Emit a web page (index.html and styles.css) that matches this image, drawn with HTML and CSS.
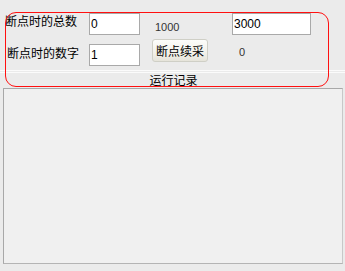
FILE: index.html
```html
<!DOCTYPE html>
<html lang="zh">

<head>
    <meta charset="UTF-8">
    <title>断点续采</title>
    <link rel="stylesheet" href="styles.css">
</head>

<body>
    <!-- Parámetros del punto de interrupción -->
    <div class="panel">
        <span class="label label-total">断点时的总数</span>
        <input class="field field-short" type="text" value="0">
        <span class="num num-max">1000</span>
        <input class="field field-long" type="text" value="3000">

        <span class="label label-count">断点时的数字</span>
        <input class="field field-short field-low" type="text" value="1">
        <button class="btn">断点续采</button>
        <span class="num num-count">0</span>
    </div>

    <!-- Separador -->
    <div class="sep"></div>

    <!-- Registro de ejecución -->
    <div class="group-title">运行记录</div>
    <div class="log"></div>

    <!-- Marca roja sobre los parámetros -->
    <div class="mark"></div>
</body>

</html>
```

FILE: styles.css
```css
/* Reseteo básico */
* {
    margin: 0;
    padding: 0;
    box-sizing: border-box;
}

body {
    background: #ebebeb;
    font-family: "Noto Sans CJK SC", sans-serif;
    font-size: 12px;
    color: #000;
    position: relative;
    height: 271px;
    overflow: hidden;
}

/* Rejilla de parámetros */
.panel {
    display: grid;
    grid-template-columns: 84px 51px 92px 79px;
    grid-template-rows: 22px 27px;
    row-gap: 4px;
    padding: 13px 0 0 5px;
    margin-bottom: 4px;
}

.label {
    line-height: 14px;
    align-self: start;
    white-space: nowrap;
}

.label-total {
    margin-top: 1px;
}

.label-count {
    margin-top: 7px;
    margin-left: 2px;
}

.field {
    height: 22px;
    border: 1px solid #a9a9a9;
    background: #fff;
    font-family: "Liberation Sans", sans-serif;
    font-size: 12px;
    padding: 0 1px;
    color: #000;
    outline: none;
}

.field-short {
    width: 51px;
}

.field-long {
    width: 79px;
}

.field-low {
    align-self: end;
}

.num {
    font-family: "Liberation Sans", sans-serif;
    font-size: 11px;
    line-height: 14px;
    color: #333;
    align-self: start;
}

.num-max {
    margin: 7px 0 0 15px;
}

.num-count {
    margin: 6px 0 0 7px;
}

/* Botón estilo clásico */
.btn {
    align-self: start;
    width: 56px;
    height: 23px;
    margin-left: 12px;
    border: 1px solid #cfcfc6;
    border-radius: 3px;
    background: linear-gradient(#fdfdfb, #f2f1ea 60%, #e6e4da);
    font-family: "Noto Sans CJK SC", sans-serif;
    font-size: 12px;
    color: #000;
}

/* Línea doble */
.sep {
    height: 3px;
    border-top: 1px solid #fbfbfb;
    border-bottom: 1px solid #fbfbfb;
}

.group-title {
    text-align: center;
    line-height: 14px;
    margin-bottom: 1px;
    padding-left: 2px;
}

/* Caja de registro */
.log {
    height: 176px;
    margin: 0 2px 0 3px;
    background: #f0f0f0;
    border: 1px solid #a8a8a8;
    border-right-color: #c8c8c8;
    border-bottom-color: #b4b4b4;
}

/* Marca roja superpuesta */
.mark {
    position: absolute;
    left: 5px;
    top: 12px;
    width: 324px;
    height: 75px;
    border: 1px solid #ff1010;
    border-radius: 11px;
    pointer-events: none;
}
```
